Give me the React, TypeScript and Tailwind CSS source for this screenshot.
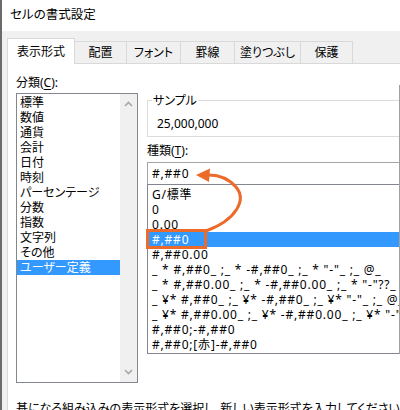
const categories = [
  "標準",
  "数値",
  "通貨",
  "会計",
  "日付",
  "時刻",
  "パーセンテージ",
  "分数",
  "指数",
  "文字列",
  "その他",
  "ユーザー定義",
]

const formats = [
  "G/標準",
  "0",
  "0.00",
  "#,##0",
  "#,##0.00",
  '_ * #,##0_ ;_ * -#,##0_ ;_ * "-"_ ;_ @_',
  '_ * #,##0.00_ ;_ * -#,##0.00_ ;_ * "-"??_ ;_ @_',
  '_ ¥* #,##0_ ;_ ¥* -#,##0_ ;_ ¥* "-"_ ;_ @_',
  '_ ¥* #,##0.00_ ;_ ¥* -#,##0.00_ ;_ ¥* "-"??_ ;_ @_',
  "#,##0;-#,##0",
  "#,##0;[赤]-#,##0",
]

const tabs = [
  { label: "配置", className: "w-[52px]" },
  { label: "フォント", className: "w-[54px]" },
  { label: "罫線", className: "w-[54px]" },
  { label: "塗りつぶし", className: "w-[66px]" },
  { label: "保護", className: "w-[52px]" },
]

function Chevron({ up }: { up?: boolean }) {
  return (
    <svg width="9" height="6" viewBox="0 0 9 6" className="block">
      <polyline
        points={up ? "1,5 4.5,1.5 8,5" : "1,1 4.5,4.5 8,1"}
        fill="none"
        stroke="#a8a8a8"
        strokeWidth="1.6"
      />
    </svg>
  )
}

export default function App() {
  return (
    <div className="relative w-[400px] h-[410px] overflow-hidden bg-white border-l-2 border-[#6b6b6b] flex flex-col text-[12px] text-black font-['Noto_Sans','Noto_Sans_CJK_JP',sans-serif] [font-feature-settings:'palt']">
      {/* title bar */}
      <div className="h-[31px] shrink-0 flex items-center pl-[8px] text-[12.5px]">セルの書式設定</div>

      <div className="flex-1 bg-[#f0f0f0] pl-[5px] flex flex-col">
        {/* tabs */}
        <div className="h-[32px] shrink-0 flex items-end">
          <div className="relative z-10 -mb-px h-[26px] w-[68px] bg-white border-t border-l border-r border-[#d9d9d9] flex items-center justify-center pt-[1px]">
            表示形式
          </div>
          {tabs.map((t) => (
            <div
              key={t.label}
              className={`${t.className} h-[22px] border-t border-r border-[#d9d9d9] flex items-center justify-center`}
            >
              {t.label}
            </div>
          ))}
        </div>

        {/* panel */}
        <div className="flex-1 bg-white border-t border-l border-[#d9d9d9] pl-[8px] pt-[11px] flex flex-col">
          <div className="flex items-start">
            {/* categories */}
            <div className="w-[122px] shrink-0">
              <div className="h-[15px] leading-[15px]">
                分類(<span className="underline underline-offset-2">C</span>):
              </div>
              <div className="mt-[3px] h-[290px] border border-[#828790] flex">
                <div className="w-[103px] pt-[1px]">
                  {categories.map((c, i) => (
                    <div
                      key={c}
                      className={`h-[15px] leading-[15px] pl-[3px] whitespace-nowrap ${
                        i === categories.length - 1 ? "bg-[#3399ff] text-white" : ""
                      }`}
                    >
                      {c}
                    </div>
                  ))}
                </div>
                <div className="w-[17px] bg-[#f0f0f0] flex flex-col items-center justify-between pt-[7px] pb-[7px]">
                  <Chevron up />
                  <Chevron />
                </div>
              </div>
            </div>

            {/* right side */}
            <div className="ml-[9px] w-[253px] mt-[10px] border-r border-[#a0a0a0]">
              <div className="relative mt-[15px] h-[37px] border-t border-l border-b border-[#dcdcdc] pl-[9px] pt-[15px]">
                <div className="absolute -top-[8px] left-[4px] bg-white px-px leading-[15px]">サンプル</div>
                <div className="leading-[15px]">25,000,000</div>
              </div>
              <div className="mt-[6px] h-[15px] leading-[15px]">
                種類(<span className="underline underline-offset-2">T</span>):
              </div>
              <div className="mt-[4px] h-[22px] border-t border-l border-[#a5a5a5] flex items-center pl-[4px] pt-[1px] tracking-[0.8px]">
                #,##0
              </div>
              <div className="border-t border-l border-b border-[#828790] pt-[2px] pb-px">
                {formats.map((f, i) => (
                  <div
                    key={f}
                    className={`h-[15px] leading-[15px] pl-[4px] whitespace-pre overflow-hidden tracking-[0.8px] ${
                      i === 3 ? "bg-[#3399ff] text-white" : ""
                    }`}
                  >
                    {f}
                  </div>
                ))}
              </div>
            </div>
          </div>

          <div className="mt-[18px] h-[15px] leading-[15px] whitespace-nowrap">
            基になる組み込みの表示形式を選択し、新しい表示形式を入力してください。
          </div>
        </div>
      </div>

      {/* annotation overlay */}
      <svg
        className="absolute top-0 left-[-2px] pointer-events-none"
        width="400"
        height="410"
        viewBox="0 0 400 410"
      >
        <rect x="147.5" y="230.5" width="58" height="17" fill="none" stroke="#ec6a2a" strokeWidth="3" />
        <path
          d="M 206 231 C 236 220, 247 200, 236 187 C 229 179, 220 175, 209 175"
          fill="none"
          stroke="#ec6a2a"
          strokeWidth="3"
          strokeLinecap="round"
        />
        <polygon points="196,175 210,168.5 209,182" fill="#ec6a2a" />
      </svg>
    </div>
  )
}
